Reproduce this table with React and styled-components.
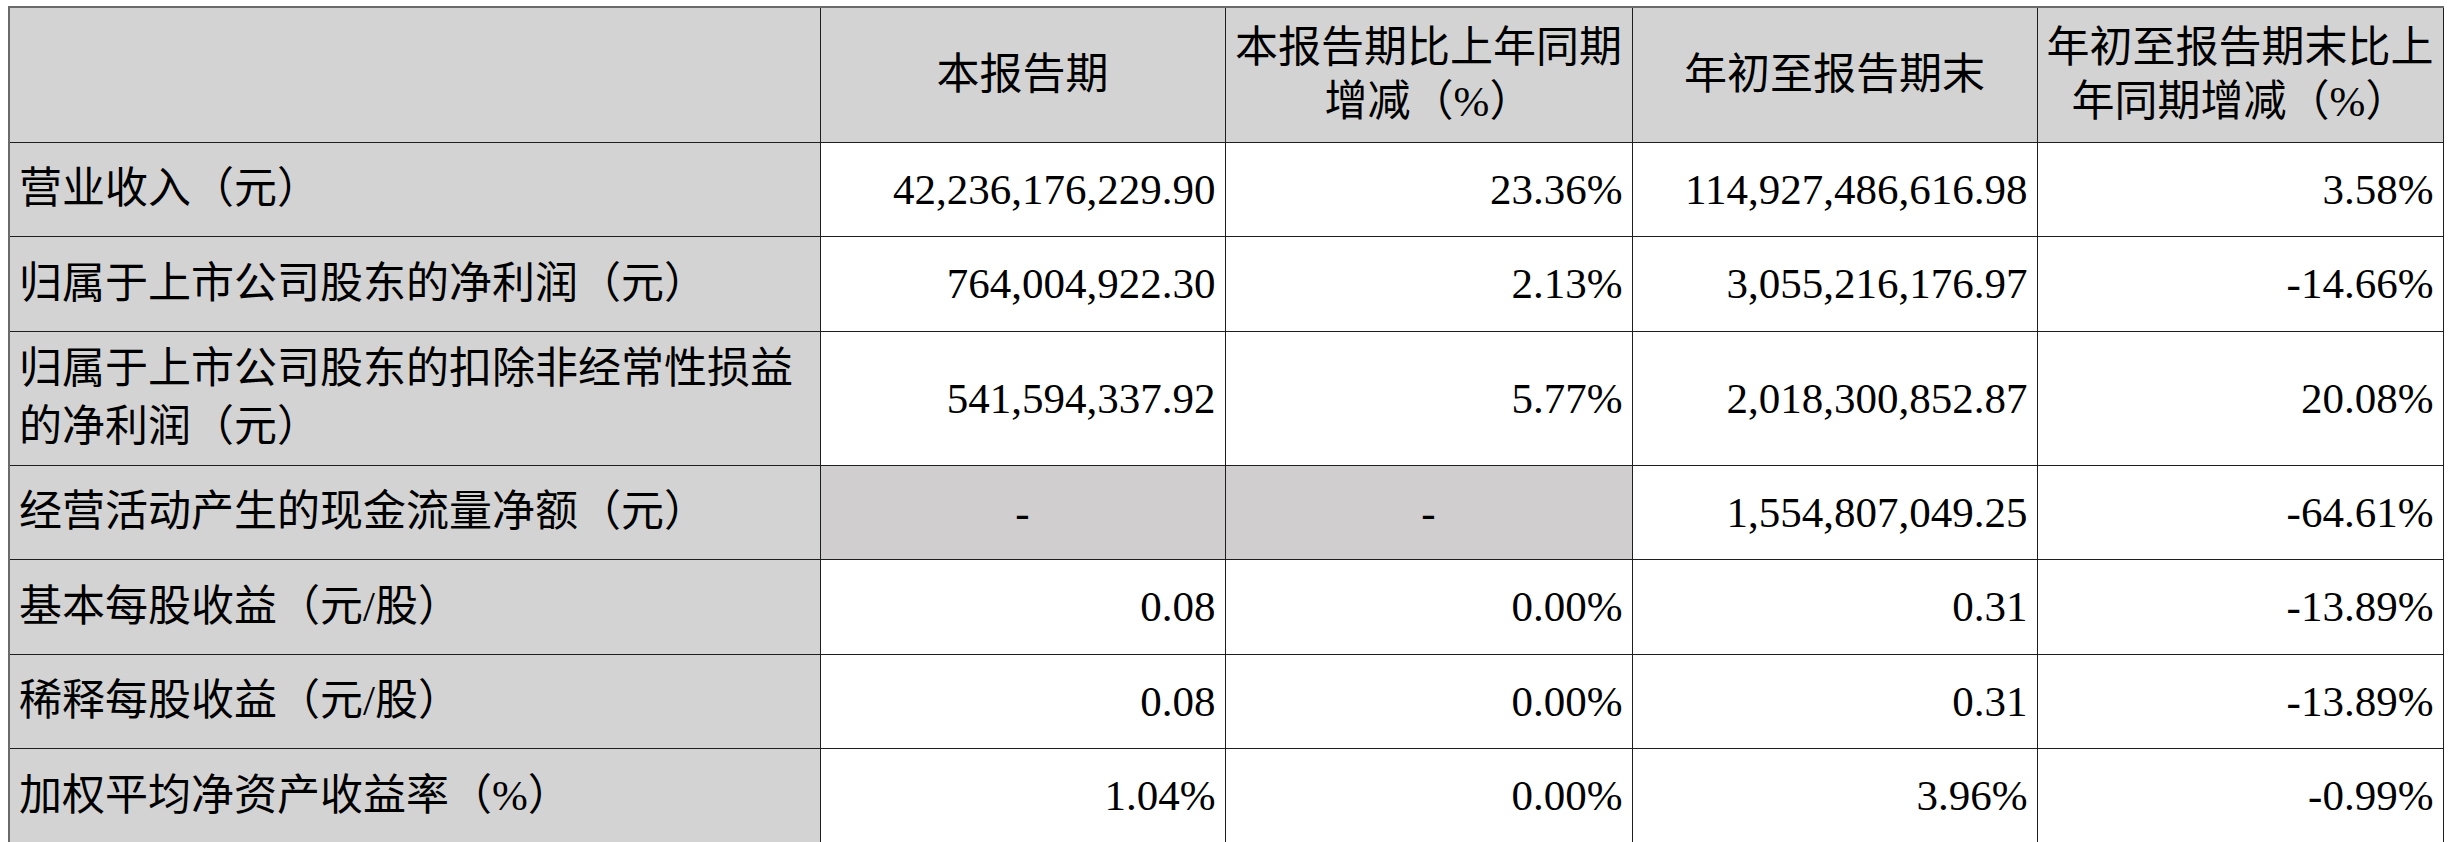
import React from "react";
import styled, { createGlobalStyle } from "styled-components";

const GlobalStyle = createGlobalStyle`
  html, body {
    margin: 0;
    padding: 0;
    background: #fff;
  }
`;

const header = [
  "",
  "本报告期",
  "本报告期比上年同期\n增减（%）",
  "年初至报告期末",
  "年初至报告期末比上\n年同期增减（%）",
];

const widths = [811, 405, 407, 405, 406];

const rows = [
  {
    label: "营业收入（元）",
    values: ["42,236,176,229.90", "23.36%", "114,927,486,616.98", "3.58%"],
  },
  {
    label: "归属于上市公司股东的净利润（元）",
    values: ["764,004,922.30", "2.13%", "3,055,216,176.97", "-14.66%"],
  },
  {
    label: "归属于上市公司股东的扣除非经常性损益\n的净利润（元）",
    values: ["541,594,337.92", "5.77%", "2,018,300,852.87", "20.08%"],
    tall: true,
  },
  {
    label: "经营活动产生的现金流量净额（元）",
    values: ["-", "-", "1,554,807,049.25", "-64.61%"],
  },
  {
    label: "基本每股收益（元/股）",
    values: ["0.08", "0.00%", "0.31", "-13.89%"],
  },
  {
    label: "稀释每股收益（元/股）",
    values: ["0.08", "0.00%", "0.31", "-13.89%"],
  },
  {
    label: "加权平均净资产收益率（%）",
    values: ["1.04%", "0.00%", "3.96%", "-0.99%"],
  },
];

export default function App() {
  return (
    <>
      <GlobalStyle />
      <Page>
        <Table>
          <colgroup>
            {widths.map((w, i) => (
              <Col key={i} $w={w} />
            ))}
          </colgroup>
          <thead>
            <HeadRow>
              {header.map((h, i) => (
                <HeadCell key={i}>{h}</HeadCell>
              ))}
            </HeadRow>
          </thead>
          <tbody>
            {rows.map((r) => (
              <BodyRow key={r.label} $tall={r.tall}>
                <LabelCell>{r.label}</LabelCell>
                {r.values.map((v, i) =>
                  v === "-" ? (
                    <EmptyCell key={i}>{v}</EmptyCell>
                  ) : (
                    <ValueCell key={i}>{v}</ValueCell>
                  )
                )}
              </BodyRow>
            ))}
          </tbody>
        </Table>
      </Page>
    </>
  );
}

const Page = styled.div`
  padding: 6px 0 0 8px;
  font-family: "Liberation Serif", "Noto Sans CJK SC", serif;
  color: #000;
`;

const Table = styled.table`
  width: 2435px;
  table-layout: fixed;
  border-collapse: collapse;
  border-top: 2px solid #6a6a6a;
  border-left: 2px solid #6a6a6a;
  font-size: 43px;
`;

const Col = styled.col`
  width: ${(p) => p.$w}px;
`;

const HeadRow = styled.tr`
  height: 135px;
`;

const BodyRow = styled.tr`
  height: ${(p) => (p.$tall ? 134 : 94.5)}px;
`;

const Cell = styled.td`
  border: 1.5px solid #1e1e1e;
  padding: 0 9px;
  vertical-align: middle;
  white-space: pre-line;
  overflow: hidden;
`;

const HeadCell = styled(Cell).attrs({ as: "th" })`
  background: #d3d3d3;
  font-weight: normal;
  text-align: center;
  line-height: 54px;
  padding: 0 4px;
`;

const LabelCell = styled(Cell)`
  background: #d3d3d3;
  text-align: left;
  line-height: 58px;
`;

const ValueCell = styled(Cell)`
  background: #fff;
  text-align: right;
`;

const EmptyCell = styled(Cell)`
  background: #d0cece;
  text-align: center;
`;
